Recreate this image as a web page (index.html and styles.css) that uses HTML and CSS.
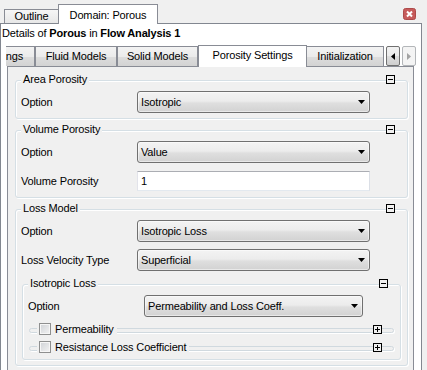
FILE: index.html
```html
<!DOCTYPE html>
<html>
<head>
<meta charset="utf-8">
<link rel="stylesheet" href="styles.css">
</head>
<body>
<div class="toptabs">
  <div class="ttab">Outline</div>
  <div class="ttab active">Domain: Porous</div>
  <div class="close"><svg width="13" height="12" viewBox="0 0 13 12"><rect x="0.5" y="0.5" width="12" height="11" rx="2" fill="#c65b5b" stroke="#ad4a4a"/><path d="M4 3.5L9 8.5M9 3.5L4 8.5" stroke="#fff" stroke-width="2"/></svg></div>
</div>
<div class="panel">
  <div class="details">Details of <b>Porous</b> in <b>Flow Analysis 1</b></div>
  <div class="tabstrip">
    <div class="tabs">
      <div class="tab first">Basic Settings</div>
      <div class="tab w-fluid">Fluid Models</div>
      <div class="tab w-solid">Solid Models</div>
      <div class="tab active">Porosity Settings</div>
      <div class="tab w-init">Initialization</div>
    </div>
    <div class="scroll">
      <div class="sbtn"><svg width="4" height="7" viewBox="0 0 4 7"><path d="M4 0V7L0 3.5Z" fill="#000"/></svg></div>
      <div class="sbtn disabled"><svg width="4" height="7" viewBox="0 0 4 7"><path d="M0 0V7L4 3.5Z" fill="#a3a3a3"/></svg></div>
    </div>
  </div>
  <div class="content">
    <div class="group">
      <div class="ghead"><span class="gtitle">Area Porosity</span><span class="toggle"><svg width="9" height="9" viewBox="0 0 9 9"><rect x="0.5" y="0.5" width="8" height="8" fill="#f0f0f0" stroke="#000"/><path d="M2 4.5H7" stroke="#000"/></svg></span></div>
      <div class="gbody">
        <div class="row"><span class="label">Option</span><div class="combo"><span>Isotropic</span><svg width="7" height="4" viewBox="0 0 7 4"><path d="M0 0H7L3.5 4Z" fill="#000"/></svg></div></div>
      </div>
    </div>
    <div class="group">
      <div class="ghead"><span class="gtitle">Volume Porosity</span><span class="toggle"><svg width="9" height="9" viewBox="0 0 9 9"><rect x="0.5" y="0.5" width="8" height="8" fill="#f0f0f0" stroke="#000"/><path d="M2 4.5H7" stroke="#000"/></svg></span></div>
      <div class="gbody">
        <div class="row"><span class="label">Option</span><div class="combo"><span>Value</span><svg width="7" height="4" viewBox="0 0 7 4"><path d="M0 0H7L3.5 4Z" fill="#000"/></svg></div></div>
        <div class="row"><span class="label">Volume Porosity</span><div class="input">1</div></div>
      </div>
    </div>
    <div class="group">
      <div class="ghead"><span class="gtitle">Loss Model</span><span class="toggle"><svg width="9" height="9" viewBox="0 0 9 9"><rect x="0.5" y="0.5" width="8" height="8" fill="#f0f0f0" stroke="#000"/><path d="M2 4.5H7" stroke="#000"/></svg></span></div>
      <div class="gbody">
        <div class="row"><span class="label">Option</span><div class="combo"><span>Isotropic Loss</span><svg width="7" height="4" viewBox="0 0 7 4"><path d="M0 0H7L3.5 4Z" fill="#000"/></svg></div></div>
        <div class="row"><span class="label">Loss Velocity Type</span><div class="combo"><span>Superficial</span><svg width="7" height="4" viewBox="0 0 7 4"><path d="M0 0H7L3.5 4Z" fill="#000"/></svg></div></div>
        <div class="group inner">
          <div class="ghead"><span class="gtitle">Isotropic Loss</span><span class="toggle"><svg width="9" height="9" viewBox="0 0 9 9"><rect x="0.5" y="0.5" width="8" height="8" fill="#f0f0f0" stroke="#000"/><path d="M2 4.5H7" stroke="#000"/></svg></span></div>
          <div class="gbody ibody">
            <div class="row"><span class="label">Option</span><div class="combo"><span>Permeability and Loss Coeff.</span><svg width="7" height="4" viewBox="0 0 7 4"><path d="M0 0H7L3.5 4Z" fill="#000"/></svg></div></div>
            <div class="sub">
              <div class="shead"><span class="stitle"><span class="check"></span><span>Permeability</span></span><span class="toggle stoggle"><svg width="9" height="9" viewBox="0 0 9 9"><rect x="0.5" y="0.5" width="8" height="8" fill="#f0f0f0" stroke="#000"/><path d="M2 4.5H7M4.5 2V7" stroke="#000"/></svg></span></div>
            </div>
            <div class="sub">
              <div class="shead"><span class="stitle"><span class="check"></span><span>Resistance Loss Coefficient</span></span><span class="toggle stoggle"><svg width="9" height="9" viewBox="0 0 9 9"><rect x="0.5" y="0.5" width="8" height="8" fill="#f0f0f0" stroke="#000"/><path d="M2 4.5H7M4.5 2V7" stroke="#000"/></svg></span></div>
            </div>
          </div>
        </div>
      </div>
    </div>
  </div>
</div>
</body>
</html>
```
FILE: styles.css
```css
* { box-sizing: border-box; }
html, body { margin: 0; padding: 0; }
body {
  width: 427px;
  height: 370px;
  overflow: hidden;
  background: #f0f0f0;
  font-family: "Liberation Sans", Arial, sans-serif;
  font-size: 11px;
  letter-spacing: -0.15px;
  color: #000;
}
svg { display: block; }

/* top tabs */
.toptabs {
  display: flex;
  align-items: flex-end;
  height: 23px;
  padding-left: 4px;
}
.ttab {
  width: 54px;
  height: 14px;
  line-height: 12px;
  text-align: center;
  border: 1px solid #898c95;
  border-bottom: 0;
  border-right: 0;
  background: linear-gradient(#f6f6f6, #e7e7e7);
  white-space: nowrap;
}
.ttab.active {
  width: 100px;
  height: 20px;
  padding-top: 1px;
  line-height: 18px;
  border-right: 1px solid #898c95;
  background: #fff;
  margin-bottom: -1px;
  position: relative;
  z-index: 1;
}
.close {
  align-self: flex-start;
  margin: 8px 11px 0 auto;
}

/* panel */
.panel {
  width: 422px;
  height: 347px;
  border: 1px solid #828790;
  border-bottom: 0;
  background: #fff;
}
.details {
  height: 21px;
  line-height: 19px;
  padding-left: 1px;
  white-space: nowrap;
}

/* inner tabs */
.tabstrip {
  display: flex;
  align-items: flex-end;
  height: 21px;
}
.tabs {
  display: flex;
  align-items: flex-end;
  width: 378px;
  height: 21px;
  margin-left: 5px;
  overflow-x: clip;
  overflow-y: visible;
  flex: none;
}
.tab {
  flex: none;
  height: 20px;
  line-height: 19px;
  border: 1px solid #898c95;
  border-bottom: 0;
  background: linear-gradient(#f3f3f3, #ebebeb 50%, #dddddd 50%, #d3d3d3);
  text-align: center;
  white-space: nowrap;
  overflow: hidden;
}
.tab.first {
  width: 90px;
  margin-left: -61px;
  text-align: right;
  padding-right: 11px;
}
.w-fluid { width: 82px; }
.w-solid { width: 81px; }
.w-init { width: 78px; margin-left: -1px; }
.tab.active {
  width: 109px;
  height: 22px;
  line-height: 18px;
  margin-bottom: -1px;
  background: #fff;
  position: relative;
  z-index: 1;
}
.scroll {
  display: flex;
  gap: 2px;
  margin-left: 2px;
}
.sbtn {
  width: 14px;
  height: 20px;
  border: 1px solid #707070;
  border-radius: 2px;
  background: linear-gradient(#f2f2f2, #ebebeb 50%, #dddddd 50%, #cfcfcf);
  display: flex;
  align-items: center;
  justify-content: center;
}
.sbtn.disabled {
  border-color: #b3b6b9;
  background: #f4f4f4;
}

/* content */
.content {
  margin-left: 6px;
  width: 407px;
  height: 310px;
  border: 1px solid #898c95;
  background: #f0f0f0;
  padding: 13px 5px 0 7px;
}
.group {
  border: 1px solid #d5dfe5;
  border-radius: 3px;
  box-shadow: 1px 1px 0 #fff, inset 1px 1px 0 #fff;
}
.group + .group { margin-top: 11px; }
.group.inner { margin: 6px 0 0 1px; }
.ghead {
  display: flex;
  align-items: center;
  height: 13px;
  margin-top: -8px;
}
.gtitle {
  background: #f0f0f0;
  padding: 0 2px;
  margin-left: 5px;
  line-height: 13px;
  white-space: nowrap;
}
.toggle {
  margin-left: auto;
  margin-right: 12px;
  width: 9px;
  height: 9px;
}
.gbody {
  display: flex;
  flex-direction: column;
  gap: 7px;
  padding: 5px 6px 5px 5px;
}
.gbody.ibody { padding-bottom: 8px; }
.row {
  display: grid;
  grid-template-columns: 116px 1fr;
  align-items: center;
  height: 22px;
  margin-right: 31px;
  white-space: nowrap;
}
.combo {
  height: 22px;
  border: 1px solid #707070;
  border-radius: 3px;
  background: linear-gradient(#f3f3f3, #ececec 45%, #dfdfdf 55%, #d2d2d2);
  box-shadow: inset 0 0 0 1px rgba(255,255,255,0.5);
  display: flex;
  align-items: center;
  justify-content: space-between;
  padding: 0 4px 0 3px;
}
.input {
  height: 20px;
  border: 1px solid;
  border-color: #abadb3 #dbdfe6 #e3e9ef #e2e3ea;
  background: #fff;
  padding: 0 3px;
  line-height: 18px;
}

/* collapsed sub groups */
.sub {
  height: 5px;
  border: 1px solid #d0d9df;
  border-radius: 3px;
  margin: 4px 0 0 1px;
  box-shadow: 1px 1px 0 #fff;
}
.sub + .sub { margin-top: 6px; }
.shead {
  display: flex;
  align-items: center;
  height: 12px;
  margin-top: -6px;
}
.stitle {
  display: flex;
  align-items: center;
  gap: 4px;
  background: #f0f0f0;
  margin-left: 7px;
  padding: 0 3px 0 2px;
  line-height: 12px;
  white-space: nowrap;
}
.check {
  width: 12px;
  height: 12px;
  border: 1px solid #8e8f8f;
  background: linear-gradient(135deg, #cfd2d6, #f3f3f3);
  box-shadow: inset 0 0 0 1px #f6f6f6;
}
.toggle.stoggle { margin-right: 11px; }
```
